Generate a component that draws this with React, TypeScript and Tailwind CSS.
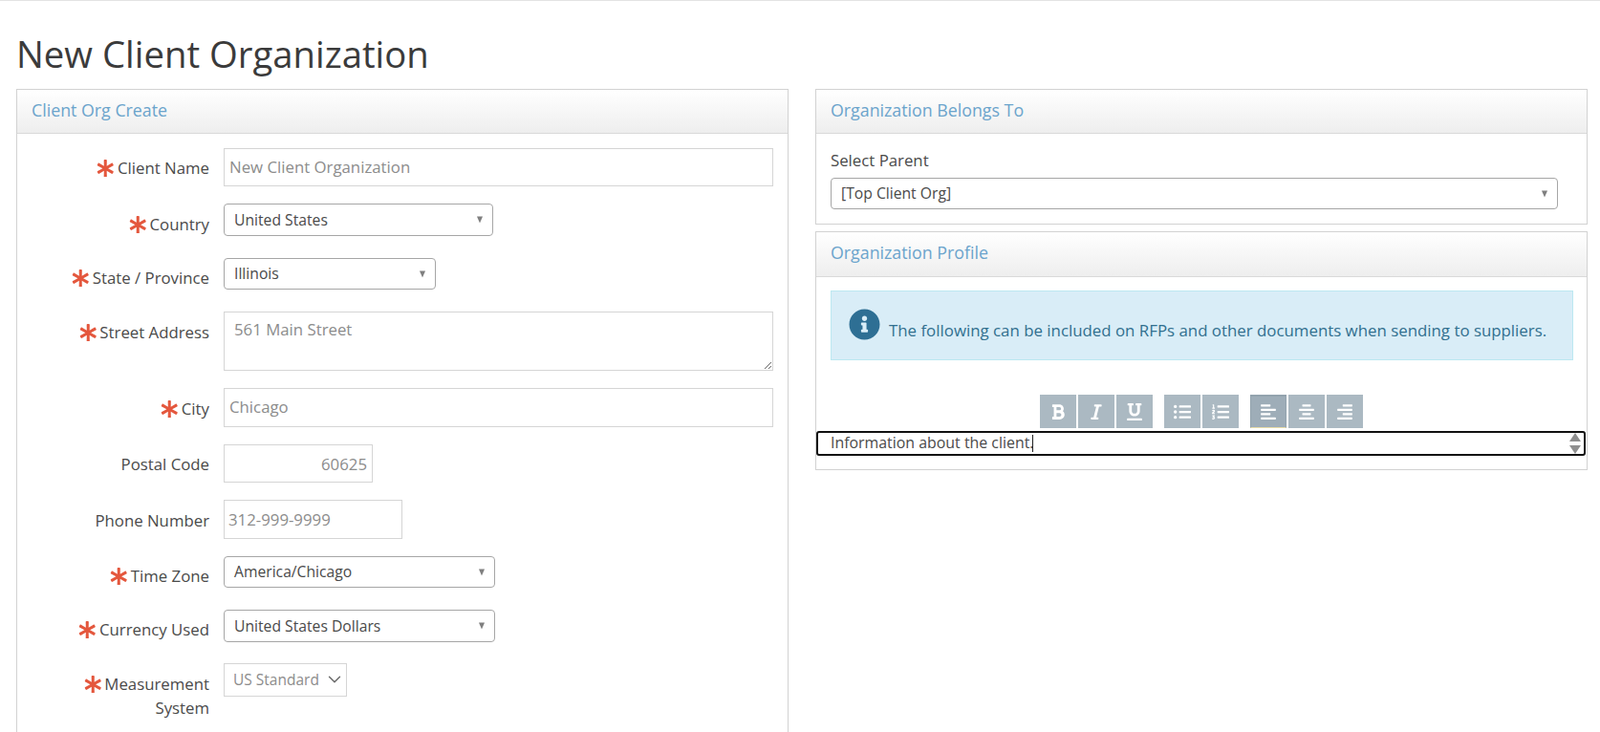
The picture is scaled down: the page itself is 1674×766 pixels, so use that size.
import type { ReactNode } from 'react';
import { ChevronDown } from 'lucide-react';
import {
  FaAlignCenter,
  FaAlignLeft,
  FaAlignRight,
  FaAsterisk,
  FaBold,
  FaInfoCircle,
  FaItalic,
  FaListOl,
  FaListUl,
  FaUnderline,
} from 'react-icons/fa';

function Panel({
  title,
  children,
  className = '',
  headerHeight = 'h-[46px]',
}: {
  title: string;
  children: ReactNode;
  className?: string;
  headerHeight?: string;
}) {
  return (
    <div className={`border border-[#d2d2d2] bg-white ${className}`}>
      <div className={`${headerHeight} border-b border-[#d9d9d9] bg-gradient-to-b from-white to-[#eeeeee] px-[15px] text-[17.8px] leading-[43px] text-[#6ba4cc]`}>
        {title}
      </div>
      {children}
    </div>
  );
}

function Field({
  label,
  required,
  top,
  labelPad,
  children,
}: {
  label: ReactNode;
  required?: boolean;
  top: string;
  labelPad: string;
  children: ReactNode;
}) {
  return (
    <div className={`flex ${top}`}>
      <div className={`w-[201px] shrink-0 text-right text-[16.8px] leading-[25px] text-[#4a4a4a] ${labelPad}`}>
        {required && <FaAsterisk className="mr-[3px] inline-block align-[-3px] text-[18.5px] text-[#e4573d]" />}
        {label}
      </div>
      <div className="ml-[15px]">{children}</div>
    </div>
  );
}

function TextBox({ value, width, height, className = '' }: { value: string; width: string; height: string; className?: string }) {
  return (
    <input
      readOnly
      value={value}
      className={`block ${width} ${height} border border-[#d5d5d5] bg-white text-[16.8px] text-[#8c8c8c] outline-none ${className}`}
    />
  );
}

function FakeSelect({ value, width, height }: { value: string; width: string; height: string }) {
  return (
    <div className={`relative ${width} ${height} flex items-center rounded-[4px] border border-[#a6a6a6] bg-white pl-[10px] pt-[1px] text-[15.7px] text-[#4a4a4a]`}>
      {value}
      <span className="absolute right-[10px] top-1/2 h-0 w-0 -translate-y-1/2 border-x-[3.5px] border-t-[7px] border-x-transparent border-t-[#7f7f7f]" />
    </div>
  );
}

function ToolButton({ icon, active }: { icon: ReactNode; active?: boolean }) {
  return (
    <div
      className={`flex h-[35px] w-[38px] items-center justify-center text-[18px] text-white ${
        active ? 'border-x border-t-2 border-b border-[#93a3ae] border-b-[#e8dca8] bg-[#9eadb8]' : 'bg-[#abb9c2]'
      }`}
    >
      {icon}
    </div>
  );
}

export default function App() {
  return (
    <div className="h-[766px] overflow-hidden border-t border-[#e3e3e3] bg-white px-[17px] font-['Open_Sans',sans-serif]">
      <h1 className="pt-[32px] pb-[14px] text-[38.3px] leading-[46px] font-normal text-[#3b3b3b]">New Client Organization</h1>

      <div className="flex gap-[28px]">
        <Panel title="Client Org Create" className="h-[700px] w-[808px] shrink-0">
          <div className="pt-[15px]">
            <Field label="Client Name" required top="" labelPad="pt-[8px]">
              <TextBox value="New Client Organization" width="w-[575px]" height="h-[40px]" className="pl-[5px] pb-[2px]" />
            </Field>
            <Field label="Country" required top="mt-[18px]" labelPad="pt-[9px]">
              <FakeSelect value="United States" width="w-[282px]" height="h-[34px]" />
            </Field>
            <Field label="State / Province" required top="mt-[23px]" labelPad="pt-[8px]">
              <FakeSelect value="Illinois" width="w-[222px]" height="h-[33px]" />
            </Field>
            <Field label="Street Address" required top="mt-[23px]" labelPad="pt-[9px]">
              <textarea
                readOnly
                value="561 Main Street"
                className="block h-[62px] w-[575px] resize-y border border-[#d5d5d5] bg-white px-[10px] py-[5px] text-[16.8px] text-[#8c8c8c] outline-none"
              />
            </Field>
            <Field label="City" required top="mt-[18px]" labelPad="pt-[9px]">
              <TextBox value="Chicago" width="w-[575px]" height="h-[41px]" className="pl-[5px] pb-[2px]" />
            </Field>
            <Field label="Postal Code" top="mt-[18px]" labelPad="pt-[8px]">
              <TextBox value="60625" width="w-[156px]" height="h-[40px]" className="pr-[5px] text-right" />
            </Field>
            <Field label="Phone Number" top="mt-[18px]" labelPad="pt-[9px]">
              <TextBox value="312-999-9999" width="w-[187px]" height="h-[41px]" className="pl-[4px]" />
            </Field>
            <Field label="Time Zone" required top="mt-[18px]" labelPad="pt-[8px]">
              <FakeSelect value="America/Chicago" width="w-[284px]" height="h-[33px]" />
            </Field>
            <Field label="Currency Used" required top="mt-[23px]" labelPad="pt-[8px]">
              <FakeSelect value="United States Dollars" width="w-[284px]" height="h-[34px]" />
            </Field>
            <Field
              label={
                <>
                  Measurement
                  <br />
                  System
                </>
              }
              required
              top="mt-[22px]"
              labelPad="pt-[9px]"
            >
              <div className="relative h-[35px] w-[129px]">
                <select
                  disabled
                  defaultValue="US Standard"
                  className="block h-full w-full appearance-none border border-[#d5d5d5] bg-white pl-[9px] text-[15.5px] text-[#8c8c8c] opacity-100"
                >
                  <option>US Standard</option>
                </select>
                <ChevronDown size={22} strokeWidth={1.5} className="absolute right-[2px] top-[6px] text-[#666666]" />
              </div>
            </Field>
          </div>
        </Panel>

        <div className="w-[808px] shrink-0">
          <Panel title="Organization Belongs To" className="h-[142px]">
            <div className="px-[15px] pt-[15px]">
              <div className="mb-[6px] text-[16.8px] leading-[25px] text-[#4a4a4a]">Select Parent</div>
              <FakeSelect value="[Top Client Org]" width="w-[761px]" height="h-[33px]" />
            </div>
          </Panel>

          <Panel title="Organization Profile" className="mt-[7px] h-[250px]" headerHeight="h-[47px]">
            <div className="px-[15px] pt-[14px]">
              <div className="flex h-[73px] w-[777px] items-start border border-[#bce8f1] bg-[#d9edf7] pl-[18px] pt-[18px] text-[16.85px] text-[#31708f]">
                <FaInfoCircle className="mr-[9px] shrink-0 text-[33px] text-[#2e6f94]" />
                <span className="pt-[12px] leading-[22px] whitespace-nowrap">The following can be included on RFPs and other documents when sending to suppliers.</span>
              </div>
              <div className="mt-[36px] ml-[219px] flex">
                <div className="flex gap-[2px]">
                  <ToolButton icon={<FaBold />} />
                  <ToolButton icon={<FaItalic />} />
                  <ToolButton icon={<FaUnderline />} />
                </div>
                <div className="ml-[12px] flex gap-[2px]">
                  <ToolButton icon={<FaListUl />} />
                  <ToolButton icon={<FaListOl />} />
                </div>
                <div className="ml-[12px] flex gap-[2px]">
                  <ToolButton icon={<FaAlignLeft />} active />
                  <ToolButton icon={<FaAlignCenter />} />
                  <ToolButton icon={<FaAlignRight />} />
                </div>
              </div>
            </div>
            <div className="relative mt-[3px] flex h-[26px] w-[805px] items-center rounded-[3px] border-2 border-[#111111] pl-[13px] text-[15.9px] text-[#4a4a4a]">
              Information about the client.
              <span className="ml-[-1px] h-[18px] w-px bg-[#222222]" />
              <div className="absolute right-[3px] top-0 flex h-full flex-col justify-center gap-[4px]">
                <span className="h-0 w-0 border-x-[6.5px] border-b-[9px] border-x-transparent border-b-[#8f8f8f]" />
                <span className="h-0 w-0 border-x-[6.5px] border-t-[9px] border-x-transparent border-t-[#8f8f8f]" />
              </div>
            </div>
          </Panel>
        </div>
      </div>
    </div>
  );
}
